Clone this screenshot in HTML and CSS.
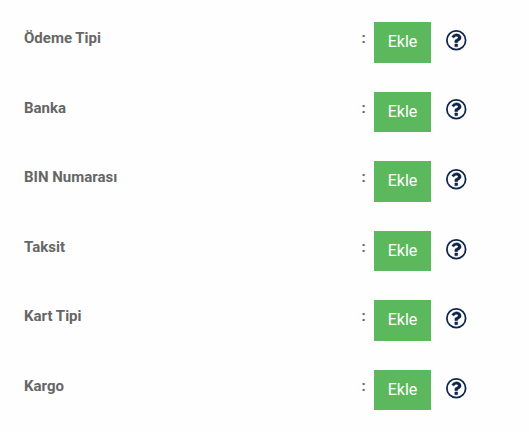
FILE: index.html
```html
<!DOCTYPE html>
<html lang="tr">
<head>
    <meta charset="utf-8">
    <title>Kurallar</title>
    <link rel="stylesheet" href="styles.css">
</head>
<body>
    <svg class="sprite" width="0" height="0">
        <symbol id="help" viewBox="0 0 1536 1536" overflow="visible">
            <circle cx="768" cy="768" r="702" fill="none" stroke="currentColor" stroke-width="132"/>
            <path fill="currentColor" stroke="currentColor" stroke-width="24" d="M880 1072v160q0 14-9 23t-23 9h-160q-14 0-23-9t-9-23v-160q0-14 9-23t23-9h160q14 0 23 9t9 23zm256-496q0 50-15 90t-45.500 69-52 44-59.500 36q-32 18-46.500 28t-26 24-11.500 29v32q0 14-9 23t-23 9h-160q-14 0-23-9t-9-23v-68q0-35 10.500-64.500t24-47.500 39-35.500 41-25.500 44.500-21q53-25 75-43t22-49q0-42-43.500-71.500t-95.500-29.500q-56 0-95 27-29 20-80 83-9 12-25 12-11 0-19-6l-108-82q-10-7-12-20t5-23q122-192 349-192 129 0 238.500 89.500t109.500 214.500z"/>
        </symbol>
    </svg>
    <div class="form">
        <div class="form-row">
            <label class="name">Ödeme Tipi</label>
            <span class="colon">:</span>
            <button class="btn">Ekle</button>
            <svg class="help"><use href="#help"/></svg>
        </div>
        <div class="form-row">
            <label class="name">Banka</label>
            <span class="colon">:</span>
            <button class="btn">Ekle</button>
            <svg class="help"><use href="#help"/></svg>
        </div>
        <div class="form-row">
            <label class="name">BIN Numarası</label>
            <span class="colon">:</span>
            <button class="btn">Ekle</button>
            <svg class="help"><use href="#help"/></svg>
        </div>
        <div class="form-row">
            <label class="name">Taksit</label>
            <span class="colon">:</span>
            <button class="btn">Ekle</button>
            <svg class="help"><use href="#help"/></svg>
        </div>
        <div class="form-row">
            <label class="name">Kart Tipi</label>
            <span class="colon">:</span>
            <button class="btn">Ekle</button>
            <svg class="help"><use href="#help"/></svg>
        </div>
        <div class="form-row">
            <label class="name">Kargo</label>
            <span class="colon">:</span>
            <button class="btn">Ekle</button>
            <svg class="help"><use href="#help"/></svg>
        </div>
    </div>
</body>
</html>
```
FILE: styles.css
```css
body {
    font-family: Roboto, sans-serif;
    font-size: 15px;
    margin: 0;
    background: #fefefe;
}

.sprite {
    display: block;
}

.form {
    display: flex;
    flex-direction: column;
    gap: 29.1px;
    padding: 22px 24px 0;
}

.form-row {
    display: flex;
    align-items: flex-start;
    height: 40.5px;
}

.name,
.colon {
    color: #666;
    font-weight: bold;
    line-height: 20px;
    padding-top: 6px;
}

.name {
    width: 337.5px;
}

.colon {
    width: 12.5px;
}

.btn {
    width: 57px;
    height: 100%;
    padding: 0 0 1.6px;
    border: 0;
    background: #5cb85c;
    color: white;
    font: 16px Roboto, sans-serif;
}

.help {
    width: 20.5px;
    height: 20.5px;
    margin: 7.9px 0 0 14.9px;
    color: #0f2548;
    overflow: visible;
}
```
